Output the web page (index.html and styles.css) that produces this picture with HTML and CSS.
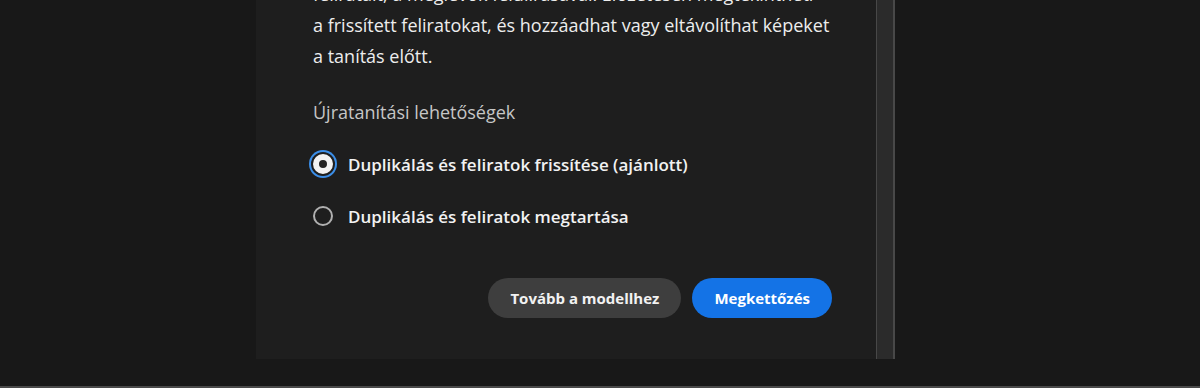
FILE: index.html
```html
<!DOCTYPE html>
<html lang="hu">
<head>
<meta charset="utf-8">
<title>Újratanítás</title>
<link rel="stylesheet" href="styles.css">
</head>
<body>
<div class="stage">
  <div class="dialog-wrap">
    <div class="dialog">
      <p class="desc">feliratait, a meglévők felülírásával. Előzetesen megtekintheti<br>a frissített feliratokat, és hozzáadhat vagy eltávolíthat képeket<br>a tanítás előtt.</p>
      <div class="group-label">Újratanítási lehetőségek</div>
      <div class="options">
        <label class="option">
          <span class="radio checked"></span>
          <span class="option-text">Duplikálás és feliratok frissítése (ajánlott)</span>
        </label>
        <label class="option">
          <span class="radio"></span>
          <span class="option-text">Duplikálás és feliratok megtartása</span>
        </label>
      </div>
      <div class="actions">
        <button class="btn btn-secondary">Tovább a modellhez</button>
        <button class="btn btn-primary">Megkettőzés</button>
      </div>
    </div>
    <div class="scrollbar"></div>
  </div>
</div>
<div class="bottom-line"></div>
</body>
</html>
```

FILE: styles.css
```css
html, body {
  margin: 0;
  padding: 0;
}
body {
  width: 1200px;
  height: 388px;
  overflow: hidden;
  background: #181818;
  display: flex;
  flex-direction: column;
  font-family: "Open Sans", "Noto Sans", "Liberation Sans", sans-serif;
}
.stage {
  flex: 1;
  display: flex;
  align-items: flex-start;
  padding-left: 256px;
}
.dialog-wrap {
  display: flex;
  height: 359px;
  overflow: hidden;
}
.dialog {
  width: 620px;
  box-sizing: border-box;
  background: #1e1e1e;
  padding: 0 40px 0 57px;
  display: flex;
  flex-direction: column;
}
.desc {
  margin: -21px 0 0 0;
  font-size: 18px;
  line-height: 31px;
  color: #ededed;
  font-weight: 400;
  white-space: nowrap;
}
.group-label {
  margin-top: 25px;
  font-size: 18px;
  line-height: 30px;
  color: #c6c6c6;
}
.options {
  margin-top: 22px;
  display: flex;
  flex-direction: column;
  gap: 22px;
}
.option {
  display: flex;
  align-items: center;
  gap: 15px;
  height: 30px;
}
.radio {
  width: 20px;
  height: 20px;
  box-sizing: border-box;
  border-radius: 50%;
  border: 2px solid #b0b0b0;
  flex: none;
}
.radio.checked {
  border: 6px solid #f2f2f2;
  background: #222;
  box-shadow: 0 0 0 2px #1e1e1e, 0 0 0 4px #3b8ee8;
}
.option-text {
  font-size: 17px;
  font-weight: 600;
  color: #f2f2f2;
}
.actions {
  margin-top: 47px;
  display: flex;
  justify-content: flex-end;
  gap: 11px;
  padding-right: 4px;
}
.btn {
  height: 40px;
  border: none;
  border-radius: 20px;
  padding: 0 22px;
  font-family: inherit;
  font-size: 15px;
  font-weight: 700;
  color: #f2f2f2;
}
.btn-secondary {
  background: #3e3e3e;
}
.btn-primary {
  background: #1473e6;
  color: #ffffff;
}
.scrollbar {
  width: 19px;
  box-sizing: border-box;
  background: #2b2b2b;
  border-left: 1px solid #484848;
  border-right: 2px solid #484848;
}
.bottom-line {
  height: 2px;
  background: #4a4a4a;
}
```
